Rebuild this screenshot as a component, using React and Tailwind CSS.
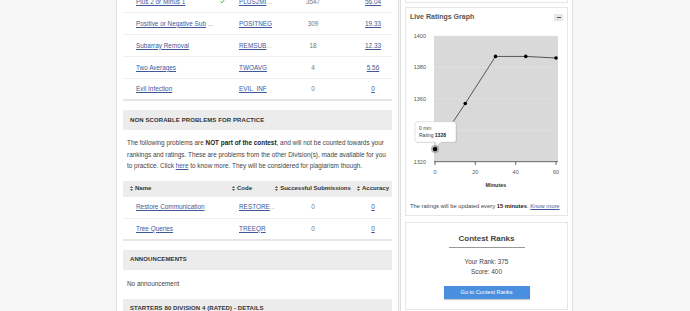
import React from "react";

const scorable = [
  { name: "Plus 2 or Minus 1", code: "PLUS2MI", codeMore: true, subs: "3547", acc: "56.04", solved: true },
  { name: "Positive or Negative Sub", nameMore: true, code: "POSITNEG", subs: "309", acc: "19.33" },
  { name: "Subarray Removal", code: "REMSUB", codeMore: true, subs: "18", acc: "12.33" },
  { name: "Two Averages", code: "TWOAVG", subs: "4", acc: "5.56" },
  { name: "Evil Infection", code: "EVIL_INF", subs: "0", acc: "0" },
];

const practice = [
  { name: "Restore Communication", code: "RESTORE", codeMore: true, subs: "0", acc: "0" },
  { name: "Tree Queries", code: "TREEQR", subs: "0", acc: "0" },
];

function SortIcon() {
  return (
    <svg width="3" height="5" viewBox="0 0 3 5" className="inline-block mr-[2px]">
      <path d="M1.5 0 L3 2 H0 Z M1.5 5 L3 3 H0 Z" fill="#555" />
    </svg>
  );
}

function ProblemRow({ p, last }) {
  return (
    <div
      className={
        last
          ? "grid grid-cols-[106px_43px_82px_1fr] items-center h-[22px] border-b-2 border-[#e6e6e6]"
          : "grid grid-cols-[106px_43px_82px_1fr] items-center h-[22px] border-b border-[#efefef]"
      }
    >
      <div className="pl-[13px] pr-[4px] flex items-center justify-between">
        <span className="whitespace-nowrap">
          <span className="underline text-[#41599a]">{p.name}</span>
          {p.nameMore && <span className="text-[#999]"> ...</span>}
        </span>
        {p.solved && (
          <svg width="5" height="5" viewBox="0 0 10 10">
            <path d="M1 5 L4 8 L9 1" stroke="#5cb85c" strokeWidth="2" fill="none" />
          </svg>
        )}
      </div>
      <div className="pl-[10px] whitespace-nowrap">
        <span className="underline text-[#41599a]">{p.code}</span>
        {p.codeMore && <span className="text-[#aaa]">...</span>}
      </div>
      <div className="text-center text-[#777]">{p.subs}</div>
      <div className="text-center">
        <span className="underline text-[#41599a]">{p.acc}</span>
      </div>
    </div>
  );
}

function SectionHeader({ children, className }) {
  return (
    <div className={`h-[20px] bg-[#ececec] flex items-center pl-[7px] font-bold text-[6px] text-[#333] tracking-[0.1px] ${className || ""}`}>
      {children}
    </div>
  );
}

function RatingsChart() {
  const pts = [
    [0, 1328],
    [15, 1357],
    [30, 1387],
    [45, 1387],
    [60, 1386],
  ];
  const X = (m) => 29 + m * 2.017;
  const Y = (v) => 10 + (1400 - v) * 1.571;
  const line = pts.map(([m, v]) => `${X(m)},${Y(v)}`).join(" ");
  return (
    <svg width="161" height="172" viewBox="0 0 161 172" className="block">
      <rect x="28" y="10" width="124" height="125.7" fill="#d9d9d9" />
      {[1380, 1360, 1340].map((v) => (
        <line key={v} x1="28" x2="152" y1={Y(v)} y2={Y(v)} stroke="#ededed" strokeWidth="0.6" strokeDasharray="2 2" />
      ))}
      <line x1="28" x2="152" y1="10" y2="10" stroke="#d6ead0" strokeWidth="0.8" strokeDasharray="2 2" />
      {/* the 1340 label sits under the tooltip */}
      {[1400, 1380, 1360, 1320].map((v) => (
        <text key={v} x="20" y={Y(v) + 2} textAnchor="end" fontSize="5.5" fill="#555">
          {v}
        </text>
      ))}
      <line x1="28" x2="152" y1="135.7" y2="135.7" stroke="#444" strokeWidth="0.8" />
      {[0, 20, 40, 60].map((m) => (
        <g key={m}>
          <line x1={X(m)} x2={X(m)} y1="135.7" y2="139" stroke="#444" strokeWidth="0.8" />
          <text x={X(m)} y="148" textAnchor="middle" fontSize="5.5" fill="#555">
            {m}
          </text>
        </g>
      ))}
      <text x="90" y="161" textAnchor="middle" fontSize="5.5" fontWeight="bold" fill="#333">
        Minutes
      </text>
      <polyline points={line} fill="none" stroke="#333" strokeWidth="0.8" />
      {pts.slice(1).map(([m, v]) => (
        <circle key={m} cx={X(m)} cy={Y(v)} r="1.8" fill="#000" />
      ))}
      <circle cx={X(0)} cy={Y(1328)} r="4" fill="#7a7a7a" opacity="0.55" />
      <circle cx={X(0)} cy={Y(1328)} r="2.2" fill="#000" />
      {/* tooltip */}
      <rect x="9.8" y="96.5" width="41" height="20.6" rx="2.5" fill="#000" opacity="0.12" />
      <polygon points="29,116 35,116 31,120.5" fill="#fff" stroke="#bbb" strokeWidth="0.5" />
      <rect x="9" y="95.7" width="41" height="20.6" rx="2.5" fill="#fff" stroke="#c4c4c4" strokeWidth="0.5" />
      <rect x="29.4" y="115.5" width="5.2" height="1.2" fill="#fff" />
      <text x="13" y="104" fontSize="5" fill="#444">
        0 min
      </text>
      <text x="13" y="111" fontSize="5" fill="#444">
        Rating <tspan fontWeight="bold" fill="#222">1328</tspan>
      </text>
    </svg>
  );
}

export default function App() {
  return (
    <div className="h-[311px] overflow-hidden bg-[#f7f7f7] flex items-start font-['Liberation_Sans',Arial,sans-serif]">
      {/* left column */}
      <div className="ml-[116px] w-[283px] h-[311px] bg-white border-x border-[#dedede] pl-[6px] pr-[6px] text-[6.4px]">
        <div className="-mt-[9px]">
          {scorable.map((p, i) => (
            <ProblemRow key={p.code} p={p} last={i === scorable.length - 1} />
          ))}
        </div>

        <SectionHeader className="mt-[9px]">NON SCORABLE PROBLEMS FOR PRACTICE</SectionHeader>
        <p className="mt-[7px] pl-[4px] text-[6.4px] leading-[11.5px] text-[#444] whitespace-nowrap">
          The following problems are <b className="text-[#222]">NOT part of the contest</b>, and will not be counted towards your
          <br />
          rankings and ratings. These are problems from the other Division(s), made available for you
          <br />
          to practice. Click <span className="underline text-[#41599a]">here</span> to know more. They will be considered for plagiarism though.
        </p>

        <div className="mt-[9px] h-[16px] bg-[#ececec] grid grid-cols-[106px_43px_82px_1fr] items-center font-bold text-[6px] text-[#333]">
          <div className="pl-[7px] whitespace-nowrap">
            <SortIcon />Name
          </div>
          <div className="pl-[3px] whitespace-nowrap">
            <SortIcon />Code
          </div>
          <div className="text-center whitespace-nowrap">
            <SortIcon />Successful Submissions
          </div>
          <div className="text-center whitespace-nowrap">
            <SortIcon />Accuracy
          </div>
        </div>
        <div>
          {practice.map((p, i) => (
            <ProblemRow key={p.code} p={p} last={i === practice.length - 1} />
          ))}
        </div>

        <SectionHeader className="mt-[9px]">ANNOUNCEMENTS</SectionHeader>
        <div className="h-[29px] flex items-center pl-[4px] text-[6.4px] text-[#444]">No announcement</div>
        <SectionHeader>STARTERS 80 DIVISION 4 (RATED) - DETAILS</SectionHeader>
      </div>

      {/* right column */}
      <div className="ml-[1px] w-[173px] h-[311px] bg-white border-x border-[#dedede] px-[4px]">
        <div className="h-[3px] border-x border-b border-[#e6e6e6]" />

        <div className="mt-[4px] h-[209px] border border-[#e6e6e6] flex flex-col">
          <div className="h-[18px] flex items-center justify-between pl-[4px] pr-[4px]">
            <span className="font-bold text-[7px] text-[#555]">Live Ratings Graph</span>
            <span className="w-[9px] h-[7px] bg-[#e6e6e6] flex items-center justify-center">
              <span className="w-[4px] h-[1px] bg-[#555]" />
            </span>
          </div>
          <RatingsChart />
          <div className="h-[16px] flex items-center pl-[4px] text-[5.8px] text-[#444] whitespace-nowrap">
            <span>
              The ratings will be updated every <b className="text-[#222]">15 minutes</b>.{" "}
              <span className="underline text-[#41599a]">Know more</span>
            </span>
          </div>
        </div>

        <div className="mt-[6px] h-[88px] border border-[#e6e6e6] flex flex-col items-center pt-[11px]">
          <div className="w-[76px] h-[14px] border-b border-[#999] text-center font-bold text-[8px] leading-[10px] text-[#444]">
            Contest Ranks
          </div>
          <div className="mt-[9px] text-[6.4px] leading-[10px] text-[#444] text-center">
            <div>Your Rank: 375</div>
            <div>Score: 400</div>
          </div>
          <div className="mt-[9px] w-[86px] h-[13px] bg-[#4a8ee0] shadow-[0_1px_1px_rgba(0,0,0,0.2)] flex items-center justify-center text-white text-[5.6px]">
            Go to Contest Ranks
          </div>
        </div>
      </div>
    </div>
  );
}
